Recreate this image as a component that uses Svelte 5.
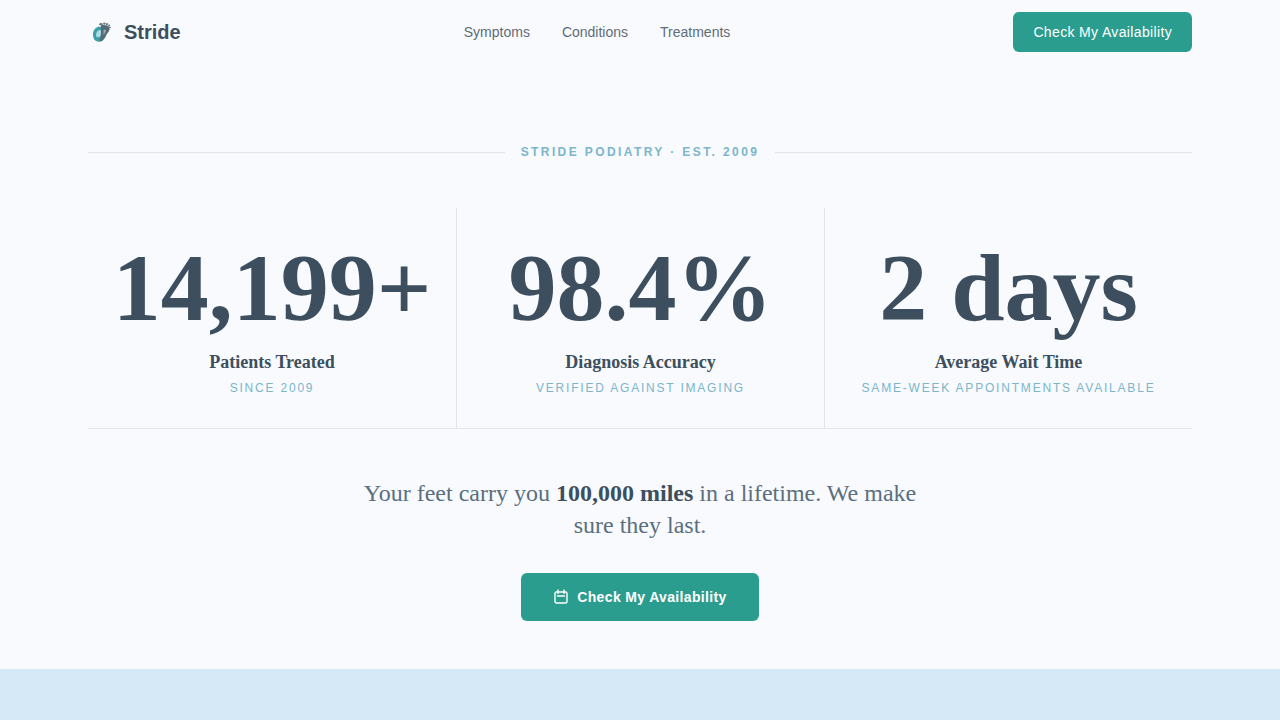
<script lang="ts">
  interface Stat {
    value: string;
    label: string;
    note: string;
  }

  const links = ['Symptoms', 'Conditions', 'Treatments'];

  const stats: Stat[] = [
    { value: '14,199+', label: 'Patients Treated', note: 'Since 2009' },
    { value: '98.4%', label: 'Diagnosis Accuracy', note: 'Verified against imaging' },
    { value: '2 days', label: 'Average Wait Time', note: 'Same-week appointments available' }
  ];
</script>

<div class="page">
  <header class="container nav">
    <a class="brand" href="/">
      <svg class="logo" viewBox="0 0 28 28" aria-hidden="true">
        <path d="M11 8.500C7 9.500 4.500 13 5 17.500C5.500 22 8.500 24.500 12 23.500C15.500 22.500 17.500 20 18.500 16.500L17 10Z" fill="#3d9fa8" />
        <path d="M11.500 12C8.500 13 7.500 16 8.500 19C11 20 13 18.500 13.500 16L14 12Z" fill="#a9dce2" />
        <path d="M13 7.500C15 6.500 20.500 7 21.500 9.500C22.300 12.500 19.500 15 18 17C16.500 19.500 15.500 22.500 13 23.500C11 23.500 11.500 21 12.500 19C13.500 16.500 12.500 10.500 13 7.500Z" fill="#566a75" />
        <path d="M15.500 12C17 10.500 18.500 12 17.500 14L15.500 17Z" fill="#9aafb6" />
        <g fill="#66767f">
          <ellipse cx="13" cy="6.300" rx="1.700" ry="1.200" />
          <circle cx="16.300" cy="5.600" r="1.200" />
          <circle cx="19" cy="6.200" r="1.100" />
          <circle cx="21.200" cy="7.600" r="1" />
          <circle cx="22.200" cy="9.500" r=".8" />
        </g>
      </svg>
      <span>Stride</span>
    </a>
    <nav class="links" aria-label="Main">
      {#each links as link}
        <a href="#{link.toLowerCase()}">{link}</a>
      {/each}
    </nav>
    <button class="btn" type="button">Check My Availability</button>
  </header>

  <main>
    <section class="container hero">
      <div class="eyebrow">
        <span>Stride Podiatry · Est. 2009</span>
      </div>

      <div class="stats">
        {#each stats as stat}
          <div class="stat">
            <div class="value">{stat.value}</div>
            <div class="label">{stat.label}</div>
            <div class="note">{stat.note}</div>
          </div>
        {/each}
      </div>

      <p class="statement">
        Your feet carry you <strong>100,000 miles</strong> in a lifetime. We make sure they last.
      </p>

      <button class="btn btn-large" type="button">
        <svg viewBox="0 0 16 16" width="16" height="16" aria-hidden="true">
          <rect x="2" y="3" width="12" height="11" rx="1.500" />
          <path d="M5 1v3.500M11 1v3.500M4.500 7h7" />
        </svg>
        Check My Availability
      </button>
    </section>
    <section class="band"></section>
  </main>
</div>

<style>
  :global(body) {
    background: #f8fafd;
    color: #3d4f5f;
    font-family: "Liberation Sans", Arial, sans-serif;
  }

  .page,
  main {
    display: flex;
    flex-direction: column;
  }

  .page {
    min-height: 100vh;
  }

  main {
    flex: 1;
  }

  .container {
    box-sizing: border-box;
    width: 100%;
    max-width: 1152px;
    margin: 0 auto;
    padding: 0 24px;
  }

  .nav {
    display: flex;
    align-items: center;
    justify-content: space-between;
    height: 64px;
  }

  .brand {
    display: flex;
    align-items: center;
    gap: 8px;
    color: #3d4f5f;
    font-size: 20px;
    font-weight: 700;
    text-decoration: none;
  }

  .logo {
    width: 28px;
    height: 28px;
  }

  .links {
    display: flex;
    gap: 32px;
  }

  .links a {
    color: #5f6d78;
    font-size: 14px;
    text-decoration: none;
  }

  .btn {
    display: inline-flex;
    align-items: center;
    justify-content: center;
    gap: 8px;
    height: 40px;
    padding: 0 20px;
    border: 0;
    border-radius: 6px;
    background: #2a9d8f;
    color: #fff;
    font-family: inherit;
    font-size: 14px;
    letter-spacing: 0.025em;
    cursor: pointer;
  }

  .btn-large {
    height: 48px;
    padding: 0 32px;
    font-weight: 700;
  }

  .btn svg {
    fill: none;
    stroke: currentColor;
    stroke-width: 1.4;
    stroke-linecap: round;
  }

  .hero {
    display: flex;
    flex-direction: column;
    align-items: center;
    padding-top: 80px;
    padding-bottom: 48px;
  }

  .eyebrow {
    display: flex;
    align-items: center;
    gap: 16px;
    width: 100%;
    margin-bottom: 48px;
    color: #7bb6cc;
    font-size: 12px;
    font-weight: 700;
    line-height: 16px;
    letter-spacing: 0.2em;
    text-transform: uppercase;
  }

  .eyebrow::before,
  .eyebrow::after {
    content: "";
    flex: 1;
    height: 1px;
    background: #e1e5ea;
  }

  .stats {
    display: grid;
    grid-template-columns: repeat(3, 1fr);
    width: 100%;
    border-bottom: 1px solid #e1e5ea;
  }

  .stat {
    min-width: 0;
    padding: 32px 24px;
    text-align: center;
  }

  .stat + .stat {
    border-left: 1px solid #e1e5ea;
  }

  .value {
    font-family: "Liberation Serif", "Times New Roman", serif;
    font-size: 96px;
    font-weight: 700;
    line-height: 96px;
    white-space: nowrap;
  }

  .label {
    margin-top: 12px;
    font-family: "Liberation Serif", "Times New Roman", serif;
    font-size: 18px;
    font-weight: 700;
    line-height: 28px;
  }

  .note {
    margin-top: 4px;
    color: #7bb6cc;
    font-size: 12px;
    line-height: 16px;
    letter-spacing: 0.15em;
    text-transform: uppercase;
  }

  .statement {
    max-width: 576px;
    margin: 48px 0 32px;
    color: #5a6f7f;
    font-family: "Liberation Serif", "Times New Roman", serif;
    font-size: 24px;
    line-height: 32px;
    text-align: center;
  }

  .statement strong {
    color: #3d4f5f;
  }

  .band {
    flex: 1;
    min-height: 48px;
    background: #d6e9f6;
  }
</style>
